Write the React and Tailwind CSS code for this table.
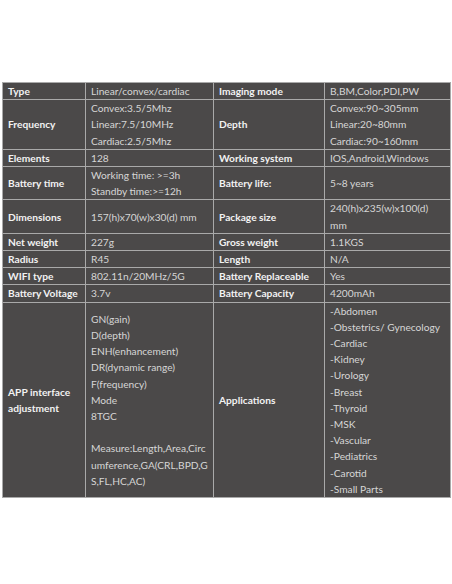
import React from "react";

const L = ({ children }) => (
  <div className="bg-[#4b4949] px-[5px] flex flex-col justify-center font-bold text-[#f2f2f2] whitespace-nowrap">
    {children}
  </div>
);
const V = ({ lines }) => (
  <div className="bg-[#4b4949] px-[5px] flex flex-col justify-center text-[#d6d6d6]">
    {lines.map((l, i) => (
      <div key={i} className="whitespace-nowrap">{l === "" ? "\u00a0" : l}</div>
    ))}
  </div>
);

const rows = [
  ["Type", ["Linear/convex/cardiac"], "Imaging mode", ["B,BM,Color,PDI,PW"]],
  ["Frequency", ["Convex:3.5/5Mhz", "Linear:7.5/10MHz", "Cardiac:2.5/5Mhz"], "Depth", ["Convex:90~305mm", "Linear:20~80mm", "Cardiac:90~160mm"]],
  ["Elements", ["128"], "Working system", ["IOS,Android,Windows"]],
  ["Battery time", ["Working time: >=3h", "Standby time:>=12h"], "Battery life:", ["5~8 years"]],
  ["Dimensions", ["157(h)x70(w)x30(d) mm"], "Package size", ["240(h)x235(w)x100(d)", "mm"]],
  ["Net weight", ["227g"], "Gross weight", ["1.1KGS"]],
  ["Radius", ["R45"], "Length", ["N/A"]],
  ["WIFI type", ["802.11n/20MHz/5G"], "Battery Replaceable", ["Yes"]],
  ["Battery Voltage", ["3.7v"], "Battery Capacity", ["4200mAh"]],
];

export default function App() {
  return (
    <div className="w-[452px] h-[584px] bg-white pt-[82px] pl-[2px] font-['Lato','Liberation_Sans',sans-serif] text-[10.2px] leading-[16.2px]">
      <div className="w-[449px] grid grid-cols-[82px_127px_110px_125px] gap-px p-px bg-[#a9a9a9]">
        {rows.map(([a, b, c, d], i) => (
          <React.Fragment key={i}>
            <L>{a}</L>
            <V lines={b} />
            <L>{c}</L>
            <V lines={d} />
          </React.Fragment>
        ))}
        <L>
          <div>APP interface</div>
          <div>adjustment</div>
        </L>
        <V
          lines={[
            "GN(gain)",
            "D(depth)",
            "ENH(enhancement)",
            "DR(dynamic range)",
            "F(frequency)",
            "Mode",
            "8TGC",
            "",
            "Measure:Length,Area,Circ",
            "umference,GA(CRL,BPD,G",
            "S,FL,HC,AC)",
          ]}
        />
        <L>Applications</L>
        <V
          lines={[
            "-Abdomen",
            "-Obstetrics/ Gynecology",
            "-Cardiac",
            "-Kidney",
            "-Urology",
            "-Breast",
            "-Thyroid",
            "-MSK",
            "-Vascular",
            "-Pediatrics",
            "-Carotid",
            "-Small Parts",
          ]}
        />
      </div>
    </div>
  );
}
